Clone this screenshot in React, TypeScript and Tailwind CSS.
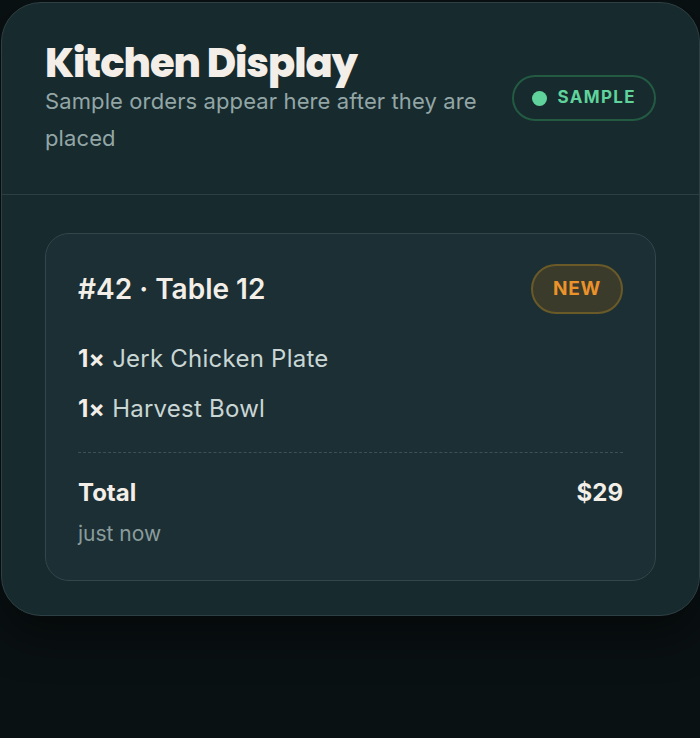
export default function App() {
  const items = [
    { qty: 1, name: "Jerk Chicken Plate" },
    { qty: 1, name: "Harvest Bowl" },
  ];

  return (
    <div className="min-h-[738px] w-[700px] bg-[#0a1113] font-['Inter',sans-serif]">
      <div className="pt-[2px]">
        <div className="w-[699px] ml-px rounded-[40px] border border-[#2e4044] bg-[#172a2e] shadow-[0_20px_40px_rgba(0,0,0,0.5)] overflow-hidden">
          <div className="flex items-start justify-between pl-[43px] pr-[43px] pt-[37px] pb-[37px] border-b border-[#2c3f43]">
            <div className="w-[450px]">
              <h1 className="text-[40px] leading-[46px] font-extrabold tracking-[-0.025em] text-[#f3efe8] font-['Poppins','Inter',sans-serif]">
                Kitchen Display
              </h1>
              <p className="text-[22px] leading-[37px] tracking-[0.005em] text-[#93a6a6] -mt-[3px]">
                Sample orders appear here after they are placed
              </p>
            </div>
            <div className="mt-[35px] flex items-center gap-[10px] h-[46px] px-[18px] rounded-full border-2 border-[#235a42] text-[#5fd39b] text-[17px] font-bold tracking-[0.08em]">
              <span className="w-[15px] h-[15px] rounded-full bg-[#5fd39b]" />
              SAMPLE
            </div>
          </div>

          <div className="px-[43px] pt-[38px] pb-[34px]">
            <div className="rounded-[24px] border border-[#33474b] bg-[#1c2f34] px-[32px] pt-[30px] pb-[30px]">
              <div className="flex items-center justify-between">
                <div className="text-[28px] font-semibold text-[#f3efe8]">#42 · Table 12</div>
                <div className="h-[50px] px-[20px] flex items-center rounded-full border-2 border-[#6a5a28] bg-[#3b3b2c] text-[#ec922a] text-[19px] font-bold tracking-[0.04em]">
                  NEW
                </div>
              </div>
              <div className="mt-[29px] flex flex-col gap-[18px]">
                {items.map((it) => (
                  <div key={it.name} className="text-[24px] leading-[32px] tracking-[0.01em] text-[#c9d6d4]">
                    <span className="font-bold text-[#f3efe8]">{it.qty}×</span> {it.name}
                  </div>
                ))}
              </div>
              <div className="mt-[27px] border-t border-dashed border-[#3d5155]" />
              <div className="mt-[22px] flex items-center justify-between text-[24px] font-bold text-[#f3efe8]">
                <span>Total</span>
                <span>$29</span>
              </div>
              <div className="mt-[7px] text-[21px] text-[#8a9c9c]">just now</div>
            </div>
          </div>
        </div>
      </div>
    </div>
  );
}
